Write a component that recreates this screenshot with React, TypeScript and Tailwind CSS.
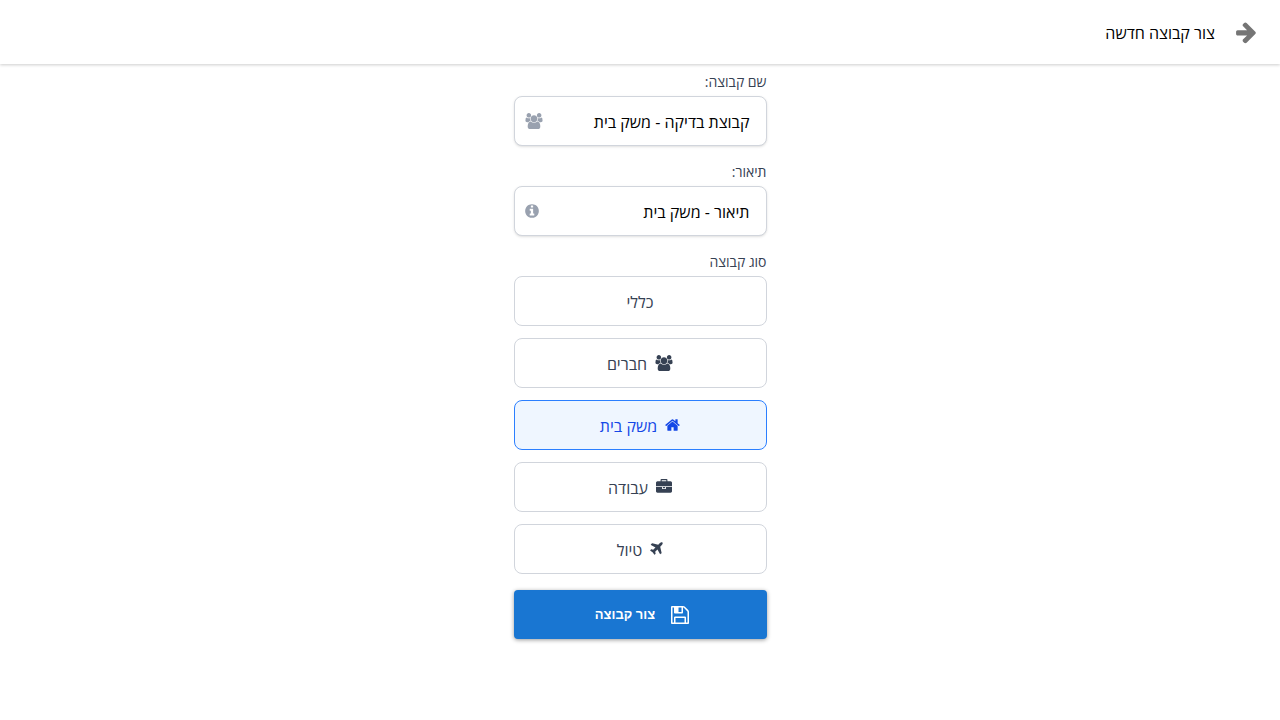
import { useState, type ReactNode } from "react";

const PATHS = {
  arrow:
    "M1600 960q0 54-37 91l-651 651q-39 37-91 37-51 0-90-37l-75-75q-38-38-38-91t38-91l293-293h-704q-52 0-84.500-37.500t-32.500-90.500v-128q0-53 32.500-90.500t84.500-37.500h704l-293-294q-38-36-38-90t38-90l75-75q38-38 90-38 53 0 91 38l651 651q37 35 37 90z",
  users:
    "M593 896q-162 5-265 128H194q-82 0-138-40.500T0 865q0-353 124-353 6 0 43.500 21t97.500 42.500T384 597q67 0 133-23-5 37-5 66 0 139 81 256zM1664 1533q0 120-73 189.500t-194 69.500H523q-121 0-194-69.500T256 1533q0-53 3.500-103.500t14-109T300 1212t43-97.500 62-81 85.500-53.500T602 960q10 0 43 21.500t73 48 107 48 135 21.500 135-21.500 107-48 73-48 43-21.500q61 0 111.500 20t85.500 53.500 62 81 43 97.500 26.500 108.500 14 109 3.500 103.500zM640 256q0 106-75 181t-181 75-181-75-75-181 75-181T384 0t181 75 75 181zM1344 640q0 159-112.500 271.500T960 1024 688.500 911.500 576 640t112.500-271.500T960 256t271.500 112.500T1344 640zM1920 865q0 78-56 118.500T1726 1024h-134q-103-123-265-128 81-117 81-256 0-29-5-66 66 23 133 23 59 0 119-21.500t97.500-42.500 43.500-21q124 0 124 353zM1792 256q0 106-75 181t-181 75-181-75-75-181 75-181 181-75 181 75 75 181z",
  info:
    "M1152 1376v-160q0-14-9-23t-23-9h-96v-512q0-14-9-23t-23-9h-320q-14 0-23 9t-9 23v160q0 14 9 23t23 9h96v320h-96q-14 0-23 9t-9 23v160q0 14 9 23t23 9h448q14 0 23-9t9-23zm-128-896v-160q0-14-9-23t-23-9h-192q-14 0-23 9t-9 23v160q0 14 9 23t23 9h192q14 0 23-9t9-23zm640 416q0 209-103 385.500t-279.500 279.500-385.500 103-385.500-103-279.500-279.500-103-385.500 103-385.500 279.500-279.500 385.500-103 385.500 103 279.500 279.500 103 385.500z",
  home:
    "M1472 992v480q0 26-19 45t-45 19h-384v-384h-256v384h-384q-26 0-45-19t-19-45v-480q0-1 .5-3t.5-3l575-474 575 474q1 2 1 6zm223-69l-62 74q-8 9-21 11h-3q-13 0-21-7l-692-577-692 577q-12 8-24 7-13-2-21-11l-62-74q-8-10-7-23.500t11-21.500l719-599q32-26 76-26t76 26l244 204v-195q0-14 9-23t23-9h192q14 0 23 9t9 23v408l219 182q10 8 11 21.500t-7 23.500z",
  briefcase:
    "M640 256h512v-128h-512v128zm1152 640v480q0 66-47 113t-113 47h-1472q-66 0-113-47t-47-113v-480h672v160q0 26 19 45t45 19h320q26 0 45-19t19-45v-160h672zm-768 0v128h-256v-128h256zm768-480v384h-1792v-384q0-66 47-113t113-47h352v-160q0-40 28-68t68-28h576q40 0 68 28t28 68v160h352q66 0 113 47t47 113z",
  plane:
    "M1568 160q44 52 12 148t-108 172l-161 161 160 696q5 19-12 33l-128 96q-7 6-19 6-4 0-7-1-15-3-21-16l-279-508-259 259 53 194q5 17-8 31l-96 96q-9 9-23 9h-2q-15-2-24-13l-189-252-252-189q-11-7-13-23-1-13 9-25l96-97q9-9 23-9 6 0 8 1l194 53 259-259-508-279q-14-8-17-24-2-16 9-27l128-128q14-13 30-8l665 159 160-160q76-76 172-108t148 12z",
  save:
    "M512 1536h768v-384h-768v384zm896 0h128v-896q0-14-10-38.500t-20-34.500l-281-281q-10-10-34-20t-39-10v416q0 40-28 68t-68 28h-576q-40 0-68-28t-28-68v-416h-128v1280h128v-416q0-40 28-68t68-28h832q40 0 68 28t28 68v416zm-384-928v-320q0-13-9.500-22.500t-22.500-9.500h-192q-13 0-22.500 9.500t-9.500 22.500v320q0 13 9.500 22.500t22.500 9.500h192q13 0 22.500-9.500t9.500-22.500zm640 32v928q0 40-28 68t-68 28h-1344q-40 0-68-28t-28-68v-1344q0-40 28-68t68-28h928q40 0 88 20t76 48l280 280q28 28 48 76t20 88z",
};

function Icon({ name, viewBox, className }: { name: keyof typeof PATHS; viewBox: string; className: string }) {
  return (
    <svg viewBox={viewBox} className={className} fill="currentColor" aria-hidden="true">
      <path d={PATHS[name]} />
    </svg>
  );
}

const GROUP_TYPES: { id: string; label: string; icon?: ReactNode }[] = [
  { id: "general", label: "כללי" },
  { id: "friends", label: "חברים", icon: <Icon name="users" viewBox="0 0 1920 1792" className="h-4 w-[18px]" /> },
  { id: "household", label: "משק בית", icon: <Icon name="home" viewBox="64 0 1664 1792" className="h-4 w-[15px]" /> },
  { id: "work", label: "עבודה", icon: <Icon name="briefcase" viewBox="0 0 1792 1792" className="size-4" /> },
  { id: "trip", label: "טיול", icon: <Icon name="plane" viewBox="192 0 1408 1792" className="h-4 w-[13px]" /> },
];

function Field({ id, label, value, onChange, icon }: { id: string; label: string; value: string; onChange: (v: string) => void; icon: ReactNode }) {
  return (
    <div className="flex flex-col gap-1">
      <label htmlFor={id} className="text-sm text-gray-700">
        {label}
      </label>
      <div className="relative">
        <input
          id={id}
          type="text"
          value={value}
          onChange={(e) => onChange(e.target.value)}
          className="h-[50px] w-full rounded-lg border border-gray-300 bg-white ps-4 pe-10 pt-0.5 text-base text-black shadow-sm outline-none"
        />
        <span className="pointer-events-none absolute inset-y-0 left-[11px] flex items-center text-gray-400">{icon}</span>
      </div>
    </div>
  );
}

export default function App() {
  const [name, setName] = useState("קבוצת בדיקה - משק בית");
  const [description, setDescription] = useState("תיאור - משק בית");
  const [type, setType] = useState("household");

  return (
    <div dir="rtl" className="min-h-screen bg-white font-['Open_Sans',sans-serif]">
      <header className="flex h-16 items-center gap-5 px-6 shadow-[0_1px_3px_rgba(0,0,0,0.2)]">
        <button type="button" aria-label="חזרה" className="text-[#757575]">
          <Icon name="arrow" viewBox="64 0 1536 1792" className="h-6 w-[21px]" />
        </button>
        <h1 className="pt-0.5 text-base text-black">צור קבוצה חדשה</h1>
      </header>

      <main className="mx-auto w-full max-w-[253px] pt-2">
        <form className="flex flex-col gap-4" onSubmit={(e) => e.preventDefault()}>
          <Field
            id="group-name"
            label="שם קבוצה:"
            value={name}
            onChange={setName}
            icon={<Icon name="users" viewBox="0 0 1920 1792" className="h-4 w-[18px]" />}
          />
          <Field
            id="group-description"
            label="תיאור:"
            value={description}
            onChange={setDescription}
            icon={<Icon name="info" viewBox="128 0 1536 1792" className="h-4 w-[14px]" />}
          />
          <div>
            <h2 id="group-type" className="mb-1 text-sm text-gray-700">
              סוג קבוצה
            </h2>
            <div role="group" aria-labelledby="group-type" className="flex flex-col gap-3">
              {GROUP_TYPES.map((item) => (
                <button
                  key={item.id}
                  type="button"
                  aria-pressed={type === item.id}
                  onClick={() => setType(item.id)}
                  className={`flex h-[50px] items-center justify-center gap-2 rounded-lg border text-base ${
                    type === item.id ? "border-blue-500 bg-blue-50 text-blue-700" : "border-gray-300 bg-white text-gray-700"
                  }`}
                >
                  {item.icon}
                  <span className="pt-0.5">{item.label}</span>
                </button>
              ))}
            </div>
          </div>
          <button
            type="submit"
            className="flex h-[49px] items-center justify-center gap-4 rounded bg-[#1976d2] pl-1 font-['Liberation_Sans',sans-serif] text-[13px] font-bold text-white shadow-[0_1px_4px_rgba(0,0,0,0.4)]"
          >
            <Icon name="save" viewBox="128 128 1536 1536" className="size-[18px]" />
            <span>צור קבוצה</span>
          </button>
        </form>
      </main>
    </div>
  );
}
